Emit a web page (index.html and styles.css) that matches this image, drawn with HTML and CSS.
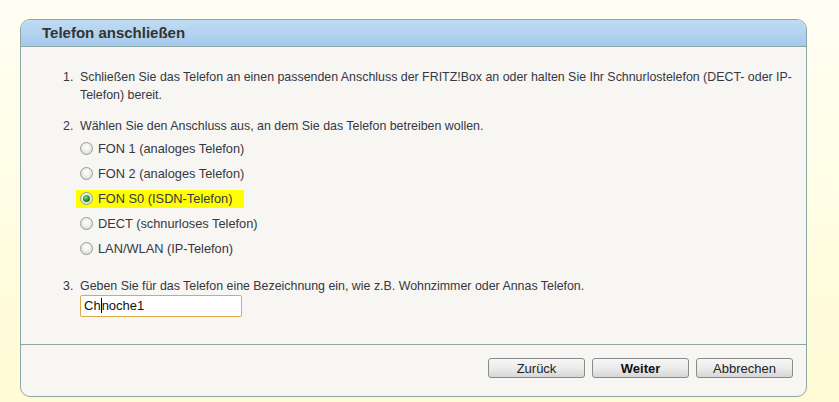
FILE: index.html
```html
<!DOCTYPE html>
<html lang="de">
<head>
<meta charset="utf-8">
<title>Telefon anschließen</title>
<link rel="stylesheet" href="styles.css">
</head>
<body>
<div class="page">
  <div class="panel">
    <div class="head">Telefon anschließen</div>
    <div class="content">
      <div class="step step1">
        <span class="num">1.</span>
        <div class="txt">Schließen Sie das Telefon an einen passenden Anschluss der FRITZ!Box an oder halten Sie Ihr Schnurlostelefon (DECT- oder IP-<br>Telefon) bereit.</div>
      </div>
      <div class="step step2">
        <span class="num">2.</span>
        <div class="txt">
          <div>Wählen Sie den Anschluss aus, an dem Sie das Telefon betreiben wollen.</div>
          <div class="radios">
            <div class="row"><span class="radio"></span><span class="lbl">FON 1 (analoges Telefon)</span></div>
            <div class="row"><span class="radio"></span><span class="lbl">FON 2 (analoges Telefon)</span></div>
            <div class="row"><span class="hl"><span class="radio checked"></span><span class="lbl">FON S0 (ISDN-Telefon)</span></span></div>
            <div class="row"><span class="radio"></span><span class="lbl">DECT (schnurloses Telefon)</span></div>
            <div class="row"><span class="radio"></span><span class="lbl">LAN/WLAN (IP-Telefon)</span></div>
          </div>
        </div>
      </div>
      <div class="step step3">
        <span class="num">3.</span>
        <div class="txt">
          <div>Geben Sie für das Telefon eine Bezeichnung ein, wie z.B. Wohnzimmer oder Annas Telefon.</div>
          <div class="input">Ch<span class="caret"></span>noche1</div>
        </div>
      </div>
    </div>
    <div class="foot">
      <button class="btn">Zurück</button>
      <button class="btn bold">Weiter</button>
      <button class="btn">Abbrechen</button>
    </div>
  </div>
</div>
</body>
</html>
```

FILE: styles.css
```css
html, body {
  margin: 0;
  padding: 0;
  height: 100%;
}
body {
  background: linear-gradient(to bottom, #fefef4 0%, #fffde4 50%, #fffbd4 100%);
  font-family: "Liberation Sans", Arial, sans-serif;
  font-size: 12.4px;
  color: #363645;
}
.page {
  padding: 19px 0 0 20px;
}
.panel {
  width: 785px;
  height: 376px;
  border: 1px solid #8fa6a6;
  border-radius: 10px;
  background: #f7f6f2;
  display: flex;
  flex-direction: column;
  overflow: hidden;
}
.head {
  height: 26px;
  line-height: 26px;
  border-bottom: 1px solid #8fa6a6;
  background: linear-gradient(to bottom, #c0dcf3, #a5c9ec);
  padding-left: 21px;
  font-size: 15px;
  font-weight: bold;
  color: #333333;
}
.content {
  height: 276px;
  padding-top: 21px;
  padding-left: 42px;
  border-bottom: 1px solid #8fa6a6;
}
.step {
  display: flex;
  line-height: 18px;
}
.num {
  width: 17px;
  flex: none;
}
.txt {
  flex: 1;
  white-space: nowrap;
}
.step2 {
  margin-top: 13px;
}
.radios {
  margin-top: 1px;
}
.row {
  height: 25px;
  display: flex;
  align-items: center;
}
.lbl {
  margin-left: 5px;
  font-size: 12.8px;
}
.hl {
  display: flex;
  align-items: center;
  background: #ffff00;
  margin-left: -4px;
  padding: 0 12px 0 4px;
  height: 18px;
}
.radio {
  width: 11px;
  height: 11px;
  border-radius: 50%;
  border: 1px solid #9a9a9a;
  background: radial-gradient(circle at 50% 40%, #ffffff 0%, #f0f0f0 40%, #cfcfcf 100%);
  flex: none;
  position: relative;
}
.radio.checked::after {
  content: "";
  position: absolute;
  left: 2px;
  top: 2px;
  width: 7px;
  height: 7px;
  border-radius: 50%;
  background: radial-gradient(circle at 40% 35%, #7be87b 0%, #1f9a1f 50%, #0a4a0a 100%);
}
.step3 {
  margin-top: 16px;
}
.input {
  width: 157px;
  height: 20px;
  line-height: 20px;
  border: 1px solid #e0a848;
  border-radius: 2px;
  background: #ffffff;
  padding-left: 3px;
  font-size: 13px;
  color: #111111;
}
.caret {
  display: inline-block;
  width: 1px;
  height: 15px;
  background: #000000;
  vertical-align: -3px;
}
.foot {
  flex: 1;
  display: flex;
  justify-content: flex-end;
  align-items: flex-start;
  padding-top: 13px;
  padding-right: 13px;
  gap: 7px;
}
.btn {
  width: 97px;
  height: 20px;
  padding: 0;
  border: 1px solid #8a8a8a;
  border-radius: 3px;
  background: linear-gradient(to bottom, #f6f6f6 0%, #ececec 50%, #d6d6d6 100%);
  font-family: "Liberation Sans", Arial, sans-serif;
  font-size: 13px;
  color: #222222;
}
.btn.bold {
  font-weight: bold;
  color: #111111;
}
```
